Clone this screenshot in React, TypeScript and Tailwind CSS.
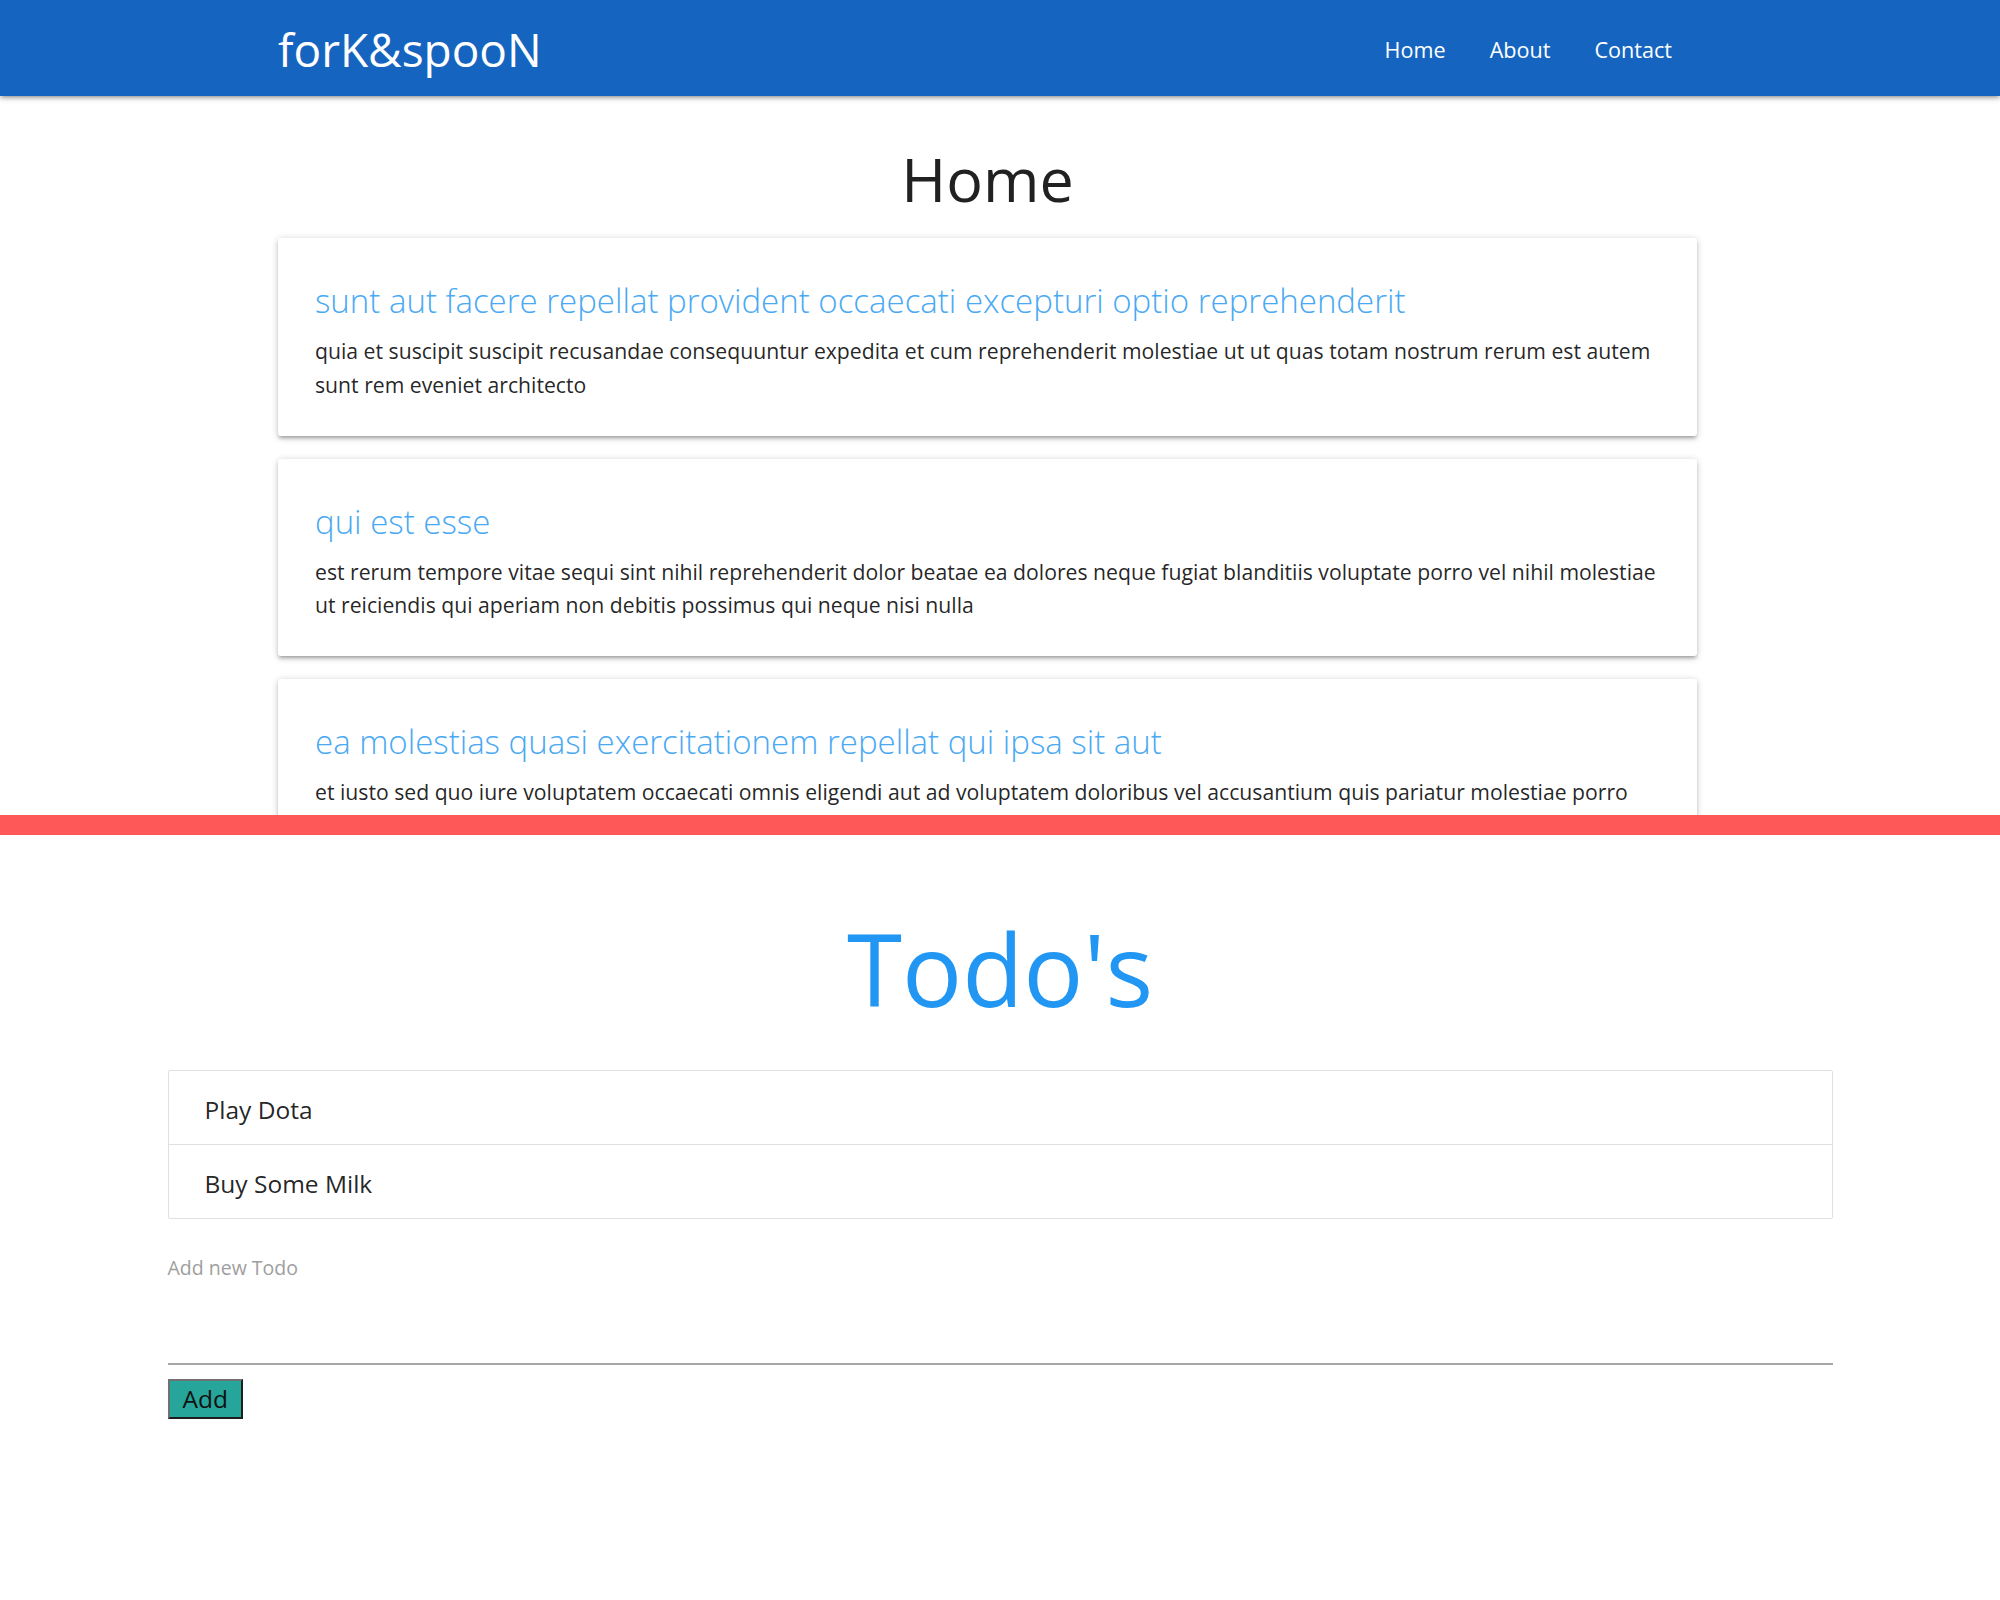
import React from 'react';

interface Post {
  id: number;
  title: string;
  body: string;
}

interface Todo {
  id: number;
  content: string;
}

const posts: Post[] = [
  {
    id: 1,
    title:
      'sunt aut facere repellat provident occaecati excepturi optio reprehenderit',
    body: 'quia et suscipit suscipit recusandae consequuntur expedita et cum reprehenderit molestiae ut ut quas totam nostrum rerum est autem sunt rem eveniet architecto',
  },
  {
    id: 2,
    title: 'qui est esse',
    body: 'est rerum tempore vitae sequi sint nihil reprehenderit dolor beatae ea dolores neque fugiat blanditiis voluptate porro vel nihil molestiae ut reiciendis qui aperiam non debitis possimus qui neque nisi nulla',
  },
  {
    id: 3,
    title: 'ea molestias quasi exercitationem repellat qui ipsa sit aut',
    body: 'et iusto sed quo iure voluptatem occaecati omnis eligendi aut ad voluptatem doloribus vel accusantium quis pariatur molestiae porro',
  },
];

const todos: Todo[] = [
  { id: 1, content: 'Play Dota' },
  { id: 2, content: 'Buy Some Milk' },
];

const Navbar: React.FC = () => {
  return (
    <nav className="h-24 bg-[#1565c0] shadow-[0_3px_3px_0_rgba(0,0,0,0.14),0_4px_1.5px_-3px_rgba(0,0,0,0.12),0_1.5px_7.5px_0_rgba(0,0,0,0.2)] relative z-10">
      <div className="ml-[278px] w-[1419px] h-full flex items-center justify-between">
        <a href="#" className="text-white text-[46px] leading-none mt-[2px]">
          forK&amp;spooN
        </a>
        <ul className="flex items-center mt-[5px] mr-[3px]">
          {['Home', 'About', 'Contact'].map((link) => (
            <li key={link}>
              <a href="#" className="block px-[22px] text-white text-[21.6px]">
                {link}
              </a>
            </li>
          ))}
        </ul>
      </div>
    </nav>
  );
};

const PostCard: React.FC<{ post: Post }> = ({ post }) => {
  return (
    <div className="bg-white rounded-[3px] mb-[23px] shadow-[0_3px_3px_0_rgba(0,0,0,0.14),0_4px_1.5px_-3px_rgba(0,0,0,0.12),0_1.5px_7.5px_0_rgba(0,0,0,0.2)]">
      <div className="px-[37px] pt-[39px] pb-[34px]">
        <span className="block text-[33px] leading-[48px] font-light text-[#4aa9f3] mb-[9px]">
          {post.title}
        </span>
        <p className="text-[21.2px] leading-[33.75px] text-[rgba(0,0,0,0.87)]">
          {post.body}
        </p>
      </div>
    </div>
  );
};

const App: React.FC = () => {
  return (
    <div className="font-['Open_Sans',sans-serif] bg-white min-h-[1600px]">
      <section className="h-[815px] overflow-hidden">
        <Navbar />
        <div className="ml-[278px] w-[1419px]">
          <h3 className="text-center text-[61px] leading-[1.1] text-[#212121] mt-[49px] mb-[26px]">
            Home
          </h3>
          {posts.map((post) => (
            <PostCard key={post.id} post={post} />
          ))}
        </div>
      </section>

      <div className="h-5 bg-[#ff5858]" />

      <section className="w-[1665px] mx-auto">
        <h1 className="text-center text-[100px] leading-[1.1] text-[#2196f3] mt-[78px] mb-[47px]">
          Todo's
        </h1>
        <ul className="border border-[#e0e0e0] rounded-[2px]">
          {todos.map((todo) => (
            <li
              key={todo.id}
              className="px-[36px] pt-[21px] pb-[17px] text-[24.5px] leading-[35px] text-[rgba(0,0,0,0.87)] border-b border-[#e0e0e0] last:border-b-0"
            >
              {todo.content}
            </li>
          ))}
        </ul>
        <form onSubmit={(e) => e.preventDefault()}>
          <label
            htmlFor="todo"
            className="block mt-[36px] text-[19.5px] leading-[26px] text-[#9e9e9e]"
          >
            Add new Todo
          </label>
          <input
            id="todo"
            type="text"
            className="block w-full h-[84px] border-b-2 border-[#a6a6a6] outline-none bg-transparent text-[22px]"
          />
          <button
            type="submit"
            className="mt-[14px] bg-[#26a69a] border-2 border-t-[#707070] border-l-[#707070] border-r-[#1e1e1e] border-b-[#1e1e1e] px-[13px] text-[24.5px] leading-[35.5px] text-[#111]"
          >
            Add
          </button>
        </form>
      </section>
    </div>
  );
};

export default App;
